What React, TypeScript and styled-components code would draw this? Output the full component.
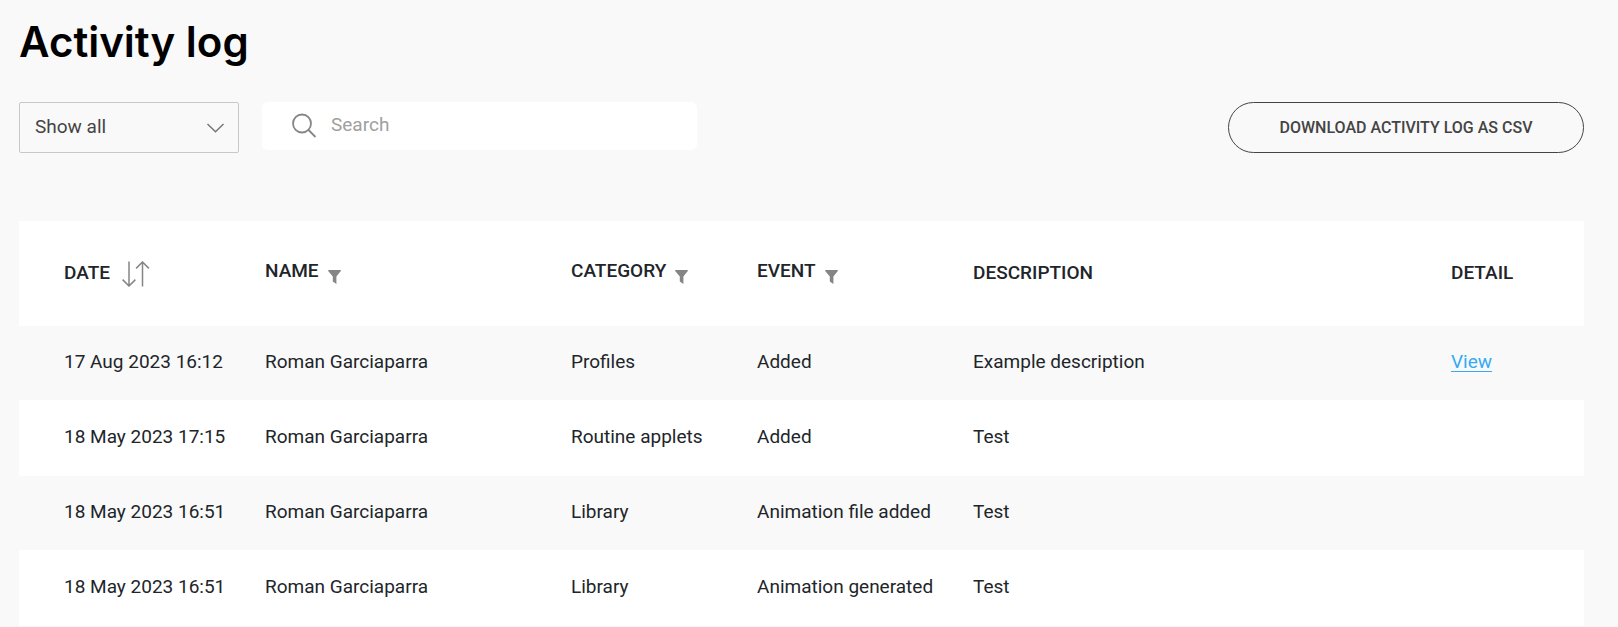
import React from "react";
import styled, { createGlobalStyle } from "styled-components";

const GlobalStyle = createGlobalStyle`
  *, *::before, *::after { box-sizing: border-box; }
  body {
    margin: 0;
    background: #f9f9f9;
    color: #212529;
    font-family: Roboto, "Liberation Sans", sans-serif;
    font-size: 19px;
    line-height: 24px;
  }
  button, input, select { font: inherit; color: inherit; }
`;

const Page = styled.main`
  padding: 18px 34px 0 19px;
`;

const Title = styled.h1`
  margin: 0;
  color: #000;
  font-family: Inter, "Liberation Sans", sans-serif;
  font-size: 42px;
  font-weight: 600;
  line-height: 48px;
`;

const Toolbar = styled.div`
  display: flex;
  align-items: flex-start;
  gap: 23px;
  margin-top: 36px;
`;

const SelectBox = styled.div`
  display: grid;
  align-items: center;
  width: 220px;

  > * { grid-area: 1 / 1; }
  > svg { justify-self: end; margin-right: 15px; pointer-events: none; }
`;

const Select = styled.select`
  appearance: none;
  width: 100%;
  height: 51px;
  padding: 0 40px 2px 15px;
  border: 1px solid #c8c8c8;
  border-radius: 2px;
  background: transparent;
  color: #444;
`;

const SearchBox = styled.label`
  display: flex;
  align-items: center;
  gap: 14px;
  flex: 0 1 435px;
  height: 48px;
  padding: 0 30px 2px;
  border-radius: 6px;
  background: #fff;

  > svg { flex: none; }
`;

const SearchInput = styled.input`
  flex: 1;
  min-width: 0;
  padding: 0;
  border: 0;
  outline: 0;
  background: transparent;

  &::placeholder { color: #a0a0a0; opacity: 1; }
`;

const DownloadButton = styled.button`
  height: 51px;
  min-width: 356px;
  margin-left: auto;
  padding: 0 50px;
  border: 1px solid #444;
  border-radius: 26px;
  background: transparent;
  color: #444;
  font-size: 16px;
  font-weight: 500;
  white-space: nowrap;
  cursor: pointer;
`;

const Table = styled.table`
  width: 100%;
  margin-top: 68px;
  border-spacing: 0;
  table-layout: fixed;
  text-align: left;
`;

const Column = styled.col<{ $width?: number }>`
  width: ${(p) => (p.$width ? `${p.$width}px` : "auto")};
`;

const HeadCell = styled.th`
  height: 105px;
  padding: 0 0 2px;
  background: #fff;
  font-weight: 500;

  &:first-child { padding-left: 45px; }
`;

const HeadButton = styled.button<{ $filter?: boolean }>`
  display: flex;
  align-items: center;
  gap: ${(p) => (p.$filter ? 9 : 12)}px;
  padding: 0 0 ${(p) => (p.$filter ? 4 : 0)}px;
  border: 0;
  background: transparent;
  font-weight: 500;
  cursor: pointer;

  > svg { margin-top: ${(p) => (p.$filter ? 12 : 2)}px; }
`;

const Row = styled.tr`
  &:nth-child(even) { background: #fff; }
`;

const Cell = styled.td`
  height: 75px;
  padding: 0 0 2px;
  border-bottom: 1px solid #fff;

  &:first-child { padding-left: 45px; }
`;

const ViewLink = styled.a`
  color: #36abf3;
  text-decoration: underline;
  text-decoration-thickness: 1px;
  text-underline-offset: 3px;
`;

const ChevronIcon = () => (
  <svg width="17" height="10" viewBox="0 0 17 10" fill="none" stroke="#757575" strokeWidth="1.4" aria-hidden="true">
    <path d="M.5 1 8.5 8.8 16.5 1" />
  </svg>
);

const SearchIcon = () => (
  <svg width="25" height="25" viewBox="0 0 25 25" fill="none" stroke="#858585" strokeWidth="1.8" aria-hidden="true">
    <circle cx="10" cy="10.5" r="9" />
    <path d="m16.500 17 7 7" />
  </svg>
);

const SortIcon = () => (
  <svg width="28" height="26" viewBox="0 0 28 26" fill="none" stroke="#858585" strokeWidth="1.5" aria-hidden="true">
    <path d="M7 .5V25M.6 18.6 7 25l6.400-6.400M20.500 25.500V1M14.100 7.400 20.500 1l6.400 6.400" />
  </svg>
);

const FilterIcon = () => (
  <svg width="13" height="14" viewBox="0 0 13 14" fill="#858585" aria-hidden="true">
    <path d="M.2 0h12.600v.9L8.400 6.600V14L4.800 11.600V6.600L.2.9Z" />
  </svg>
);

const entries = [
  { date: "17 Aug 2023 16:12", name: "Roman Garciaparra", category: "Profiles", event: "Added", description: "Example description", detail: true },
  { date: "18 May 2023 17:15", name: "Roman Garciaparra", category: "Routine applets", event: "Added", description: "Test" },
  { date: "18 May 2023 16:51", name: "Roman Garciaparra", category: "Library", event: "Animation file added", description: "Test" },
  { date: "18 May 2023 16:51", name: "Roman Garciaparra", category: "Library", event: "Animation generated", description: "Test" },
];

export default function App() {
  return (
    <>
      <GlobalStyle />
      <Page>
        <Title>Activity log</Title>
        <Toolbar>
          <SelectBox>
            <Select aria-label="Show entries" defaultValue="all">
              <option value="all">Show all</option>
            </Select>
            <ChevronIcon />
          </SelectBox>
          <SearchBox>
            <SearchIcon />
            <SearchInput type="text" placeholder="Search" aria-label="Search" />
          </SearchBox>
          <DownloadButton type="button">DOWNLOAD ACTIVITY LOG AS CSV</DownloadButton>
        </Toolbar>
        <Table>
          <colgroup>
            <Column $width={246} />
            <Column $width={306} />
            <Column $width={186} />
            <Column $width={216} />
            <Column />
            <Column $width={133} />
          </colgroup>
          <thead>
            <tr>
              <HeadCell scope="col"><HeadButton type="button">DATE<SortIcon /></HeadButton></HeadCell>
              {["NAME", "CATEGORY", "EVENT"].map((label) => (
                <HeadCell key={label} scope="col">
                  <HeadButton type="button" $filter>{label}<FilterIcon /></HeadButton>
                </HeadCell>
              ))}
              <HeadCell scope="col">DESCRIPTION</HeadCell>
              <HeadCell scope="col">DETAIL</HeadCell>
            </tr>
          </thead>
          <tbody>
            {entries.map((entry, index) => (
              <Row key={index}>
                <Cell>{entry.date}</Cell>
                <Cell>{entry.name}</Cell>
                <Cell>{entry.category}</Cell>
                <Cell>{entry.event}</Cell>
                <Cell>{entry.description}</Cell>
                <Cell>{entry.detail && <ViewLink href="#view">View</ViewLink>}</Cell>
              </Row>
            ))}
          </tbody>
        </Table>
      </Page>
    </>
  );
}
